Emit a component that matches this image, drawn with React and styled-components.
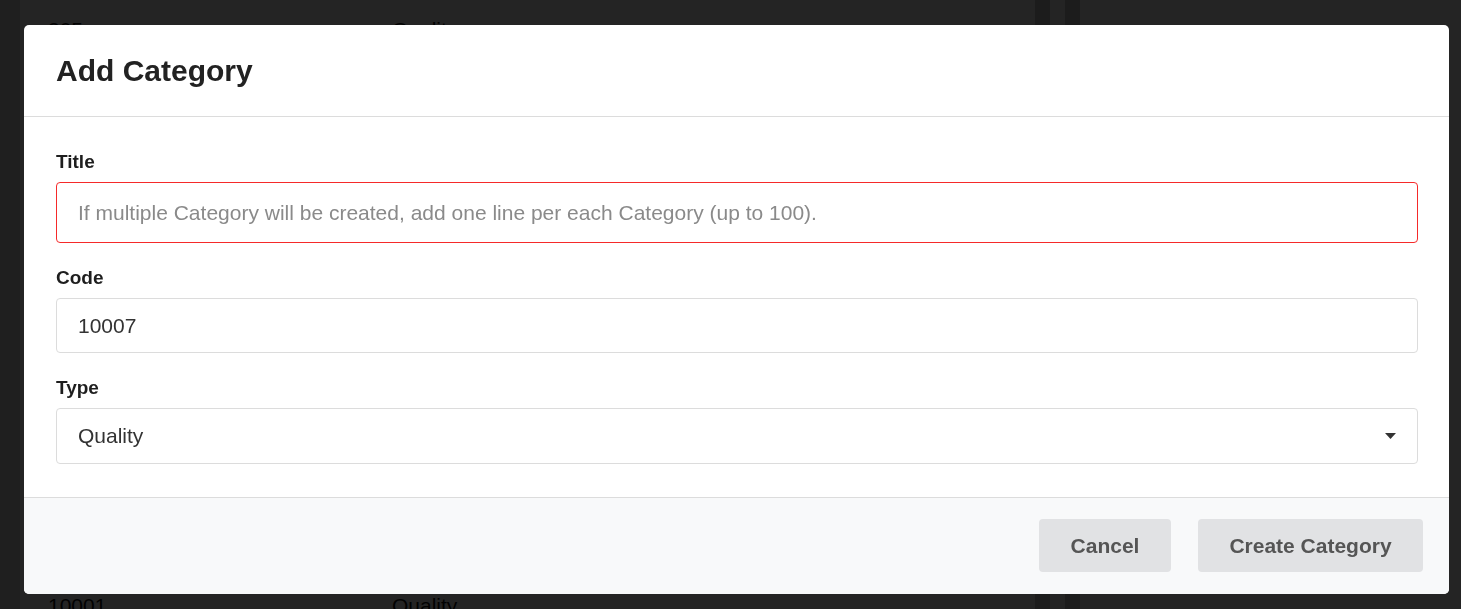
import React from "react";
import styled, { createGlobalStyle } from "styled-components";

const GlobalStyle = createGlobalStyle`
  html, body {
    margin: 0;
    padding: 0;
    height: 100%;
    overflow: hidden;
    background: #fff;
    font-family: "Liberation Sans", Arial, sans-serif;
  }
`;

const Page = styled.div`
  display: flex;
  width: 1461px;
  height: 609px;
  background: #fff;
  overflow: hidden;
`;

const LeftRail = styled.div`
  width: 20px;
  background: #d8d8d8;
`;

const TableArea = styled.div`
  flex: 0 0 1015px;
  display: flex;
  flex-direction: column;
`;

const Scrollbar = styled.div`
  width: 15px;
  background: #c2c2c2;
`;

const Gap = styled.div`
  width: 15px;
  background: #fff;
`;

const SideBorder = styled.div`
  width: 15px;
  background: #c8c8c8;
`;

const BgRow = styled.div`
  display: flex;
  align-items: center;
  height: 64px;
  flex-shrink: 0;
  font-size: 21px;
  color: #111;
  &:first-child {
    margin-top: -2px;
  }
`;

const BgCell = styled.div`
  width: ${(p) => p.$w}px;
  padding-left: ${(p) => p.$pad || 0}px;
`;

const Overlay = styled.div`
  position: fixed;
  inset: 0;
  background: rgba(0, 0, 0, 0.86);
`;

const Modal = styled.div`
  position: fixed;
  left: 24px;
  top: 25px;
  width: 1425px;
  background: #fff;
  border-radius: 5px;
  overflow: hidden;
  display: flex;
  flex-direction: column;
`;

const Header = styled.div`
  height: 92px;
  box-sizing: border-box;
  display: flex;
  align-items: center;
  padding: 0 32px;
  border-bottom: 1px solid #dcdcdc;
`;

const Heading = styled.h2`
  margin: 0;
  font-size: 30px;
  font-weight: 700;
  color: #222;
`;

const Body = styled.div`
  padding: 33px 31px 33px 32px;
  display: flex;
  flex-direction: column;
`;

const Field = styled.div`
  display: flex;
  flex-direction: column;
  & + & {
    margin-top: 23px;
  }
`;

const Label = styled.label`
  font-size: 19px;
  font-weight: 700;
  line-height: 24px;
  color: #1e1e1e;
  margin-bottom: 8px;
`;

const Input = styled.div`
  position: relative;
  height: ${(p) => p.$h}px;
  box-sizing: border-box;
  border: 1px solid ${(p) => (p.$error ? "#f52a2a" : "#dcdcdc")};
  border-radius: 4px;
  display: flex;
  align-items: center;
  padding: 0 21px;
  font-size: 21px;
  color: ${(p) => (p.$placeholder ? "#8a8a8a" : "#333")};
`;

const Caret = styled.svg`
  position: absolute;
  right: 21px;
  top: 50%;
  margin-top: -3px;
`;

const Footer = styled.div`
  height: 97px;
  box-sizing: border-box;
  border-top: 1px solid #dcdcdc;
  background: #f8f9fa;
  display: flex;
  align-items: flex-start;
  justify-content: flex-end;
  gap: 27px;
  padding: 21px 26px 0 0;
`;

const Button = styled.button`
  height: 53px;
  width: ${(p) => p.$w}px;
  border: none;
  border-radius: 4px;
  background: #e1e2e4;
  color: #555;
  font-family: "Liberation Sans", Arial, sans-serif;
  font-size: 21px;
  font-weight: 700;
  cursor: pointer;
`;

const rows = [
  ["305", "Quality"],
  ["10002", "Quality"],
  ["10003", "Quality"],
  ["10004", "Quality"],
  ["10005", "Quality"],
  ["10006", "Quality"],
  ["10008", "Quality"],
  ["10009", "Quality"],
  ["10010", "Quality"],
  ["10001", "Quality"],
];

export default function App() {
  return (
    <>
      <GlobalStyle />
      <Page>
        <LeftRail />
        <TableArea>
          {rows.map(([code, type], i) => (
            <BgRow key={i}>
              <BgCell $w={344} $pad={28}>{code}</BgCell>
              <BgCell $w={300}>{type}</BgCell>
            </BgRow>
          ))}
        </TableArea>
        <Scrollbar />
        <Gap />
        <SideBorder />
      </Page>
      <Overlay />
      <Modal>
        <Header>
          <Heading>Add Category</Heading>
        </Header>
        <Body>
          <Field>
            <Label>Title</Label>
            <Input $h={61} $error $placeholder>
              If multiple Category will be created, add one line per each Category (up to 100).
            </Input>
          </Field>
          <Field>
            <Label>Code</Label>
            <Input $h={55}>10007</Input>
          </Field>
          <Field>
            <Label>Type</Label>
            <Input $h={56}>
              Quality
              <Caret width="11" height="6" viewBox="0 0 11 6">
                <path d="M0 0 L11 0 L5.5 6 Z" fill="#333" />
              </Caret>
            </Input>
          </Field>
        </Body>
        <Footer>
          <Button $w={132}>Cancel</Button>
          <Button $w={225}>Create Category</Button>
        </Footer>
      </Modal>
    </>
  );
}
